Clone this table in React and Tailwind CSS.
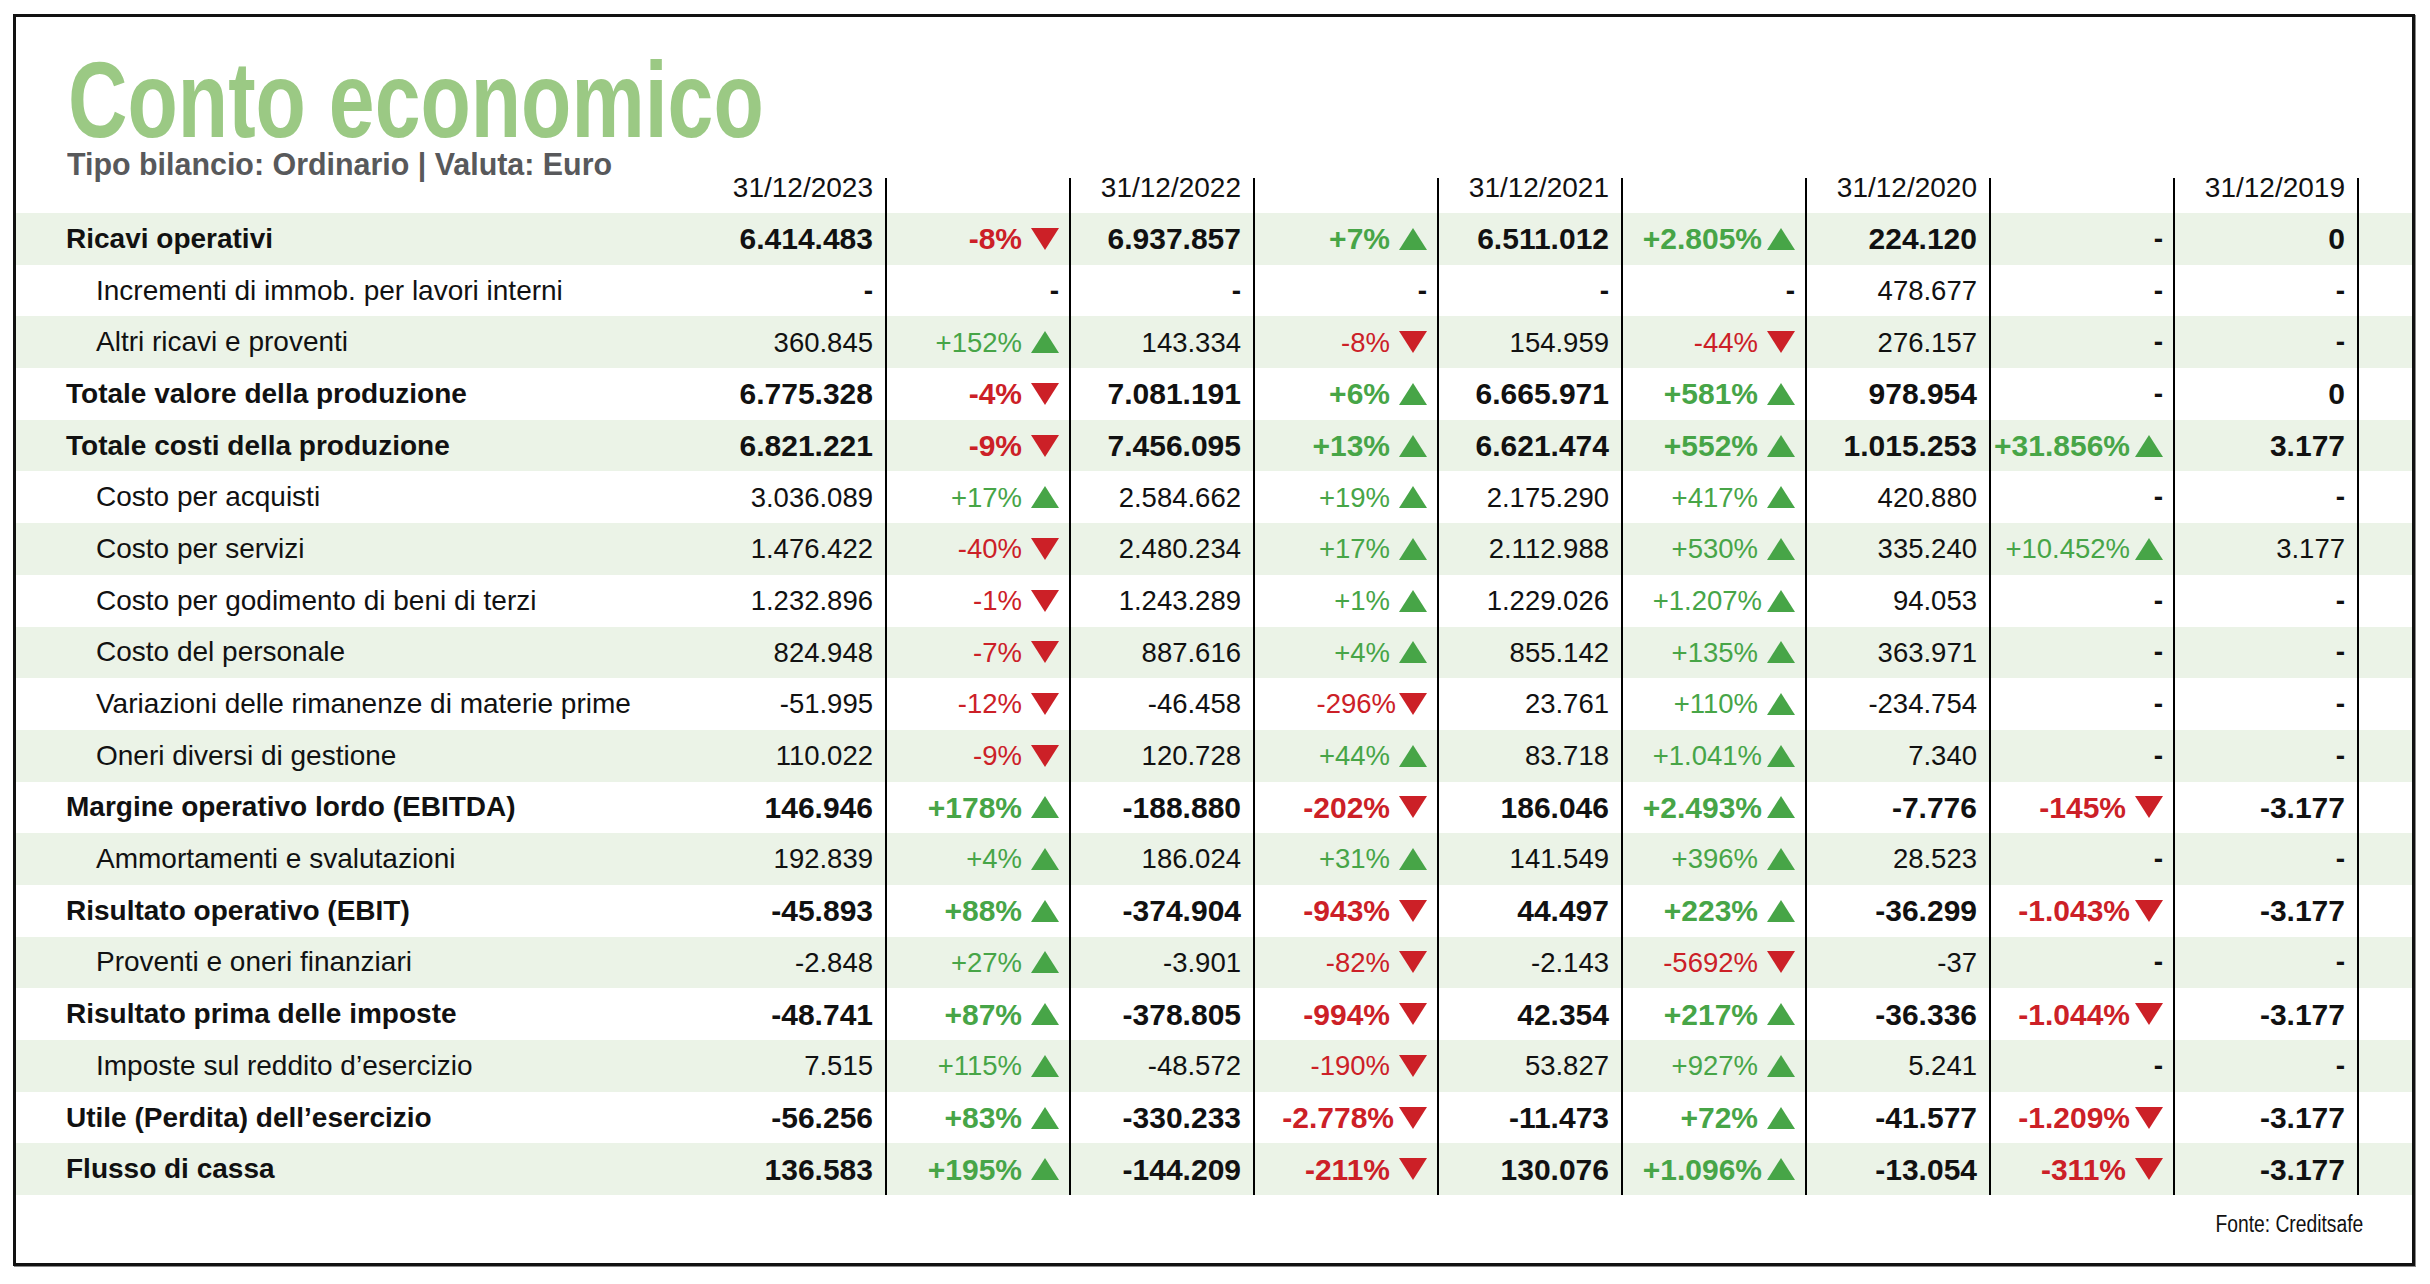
import React from "react";
import clsx from "clsx";

const rows = [
  ["Ricavi operativi", true, ["6.414.483", "-8%", "6.937.857", "+7%", "6.511.012", "+2.805%", "224.120", "-", "0"]],
  ["Incrementi di immob. per lavori interni", false, ["-", "-", "-", "-", "-", "-", "478.677", "-", "-"]],
  ["Altri ricavi e proventi", false, ["360.845", "+152%", "143.334", "-8%", "154.959", "-44%", "276.157", "-", "-"]],
  ["Totale valore della produzione", true, ["6.775.328", "-4%", "7.081.191", "+6%", "6.665.971", "+581%", "978.954", "-", "0"]],
  ["Totale costi della produzione", true, ["6.821.221", "-9%", "7.456.095", "+13%", "6.621.474", "+552%", "1.015.253", "+31.856%", "3.177"]],
  ["Costo per acquisti", false, ["3.036.089", "+17%", "2.584.662", "+19%", "2.175.290", "+417%", "420.880", "-", "-"]],
  ["Costo per servizi", false, ["1.476.422", "-40%", "2.480.234", "+17%", "2.112.988", "+530%", "335.240", "+10.452%", "3.177"]],
  ["Costo per godimento di beni di terzi", false, ["1.232.896", "-1%", "1.243.289", "+1%", "1.229.026", "+1.207%", "94.053", "-", "-"]],
  ["Costo del personale", false, ["824.948", "-7%", "887.616", "+4%", "855.142", "+135%", "363.971", "-", "-"]],
  ["Variazioni delle rimanenze di materie prime", false, ["-51.995", "-12%", "-46.458", "-296%", "23.761", "+110%", "-234.754", "-", "-"]],
  ["Oneri diversi di gestione", false, ["110.022", "-9%", "120.728", "+44%", "83.718", "+1.041%", "7.340", "-", "-"]],
  ["Margine operativo lordo (EBITDA)", true, ["146.946", "+178%", "-188.880", "-202%", "186.046", "+2.493%", "-7.776", "-145%", "-3.177"]],
  ["Ammortamenti e svalutazioni", false, ["192.839", "+4%", "186.024", "+31%", "141.549", "+396%", "28.523", "-", "-"]],
  ["Risultato operativo (EBIT)", true, ["-45.893", "+88%", "-374.904", "-943%", "44.497", "+223%", "-36.299", "-1.043%", "-3.177"]],
  ["Proventi e oneri finanziari", false, ["-2.848", "+27%", "-3.901", "-82%", "-2.143", "-5692%", "-37", "-", "-"]],
  ["Risultato prima delle imposte", true, ["-48.741", "+87%", "-378.805", "-994%", "42.354", "+217%", "-36.336", "-1.044%", "-3.177"]],
  ["Imposte sul reddito d’esercizio", false, ["7.515", "+115%", "-48.572", "-190%", "53.827", "+927%", "5.241", "-", "-"]],
  ["Utile (Perdita) dell’esercizio", true, ["-56.256", "+83%", "-330.233", "-2.778%", "-11.473", "+72%", "-41.577", "-1.209%", "-3.177"]],
  ["Flusso di cassa", true, ["136.583", "+195%", "-144.209", "-211%", "130.076", "+1.096%", "-13.054", "-311%", "-3.177"]],
];

const dates = ["31/12/2023", "", "31/12/2022", "", "31/12/2021", "", "31/12/2020", "", "31/12/2019"];

const gridCols = "grid grid-cols-[687px_repeat(9,184px)_1fr]";

function Triangle({ up, className }) {
  return (
    <svg width="28" height="22" viewBox="0 0 28 22" className={clsx("shrink-0", className)}>
      {up ? (
        <polygon points="0,22 14,0 28,22" fill="#47a547" />
      ) : (
        <polygon points="0,0 28,0 14,22" fill="#cc2027" />
      )}
    </svg>
  );
}

function ValueCell({ v, bold }) {
  return (
    <div className="flex items-center justify-end border-r-2 border-black pr-[12px]">
      {v === "-" ? (
        <span className="font-bold text-[28px]">-</span>
      ) : (
        <span className={bold ? "font-bold text-[30px]" : "text-[27.5px]"}>{v}</span>
      )}
    </div>
  );
}

function PctCell({ v, bold }) {
  if (v === "-") {
    return (
      <div className="flex items-center justify-end border-r-2 border-black pr-[10px]">
        <span className="font-bold text-[28px]">-</span>
      </div>
    );
  }
  const up = v.startsWith("+");
  const gap = v === "-296%" ? "ml-[3px]" : v.length >= 7 ? "ml-[5px]" : "ml-[9px]";
  return (
    <div className="flex items-center justify-end border-r-2 border-black pr-[10px]">
      <span
        className={clsx(
          up ? "text-[#47a547]" : "text-[#cc2027]",
          bold ? "font-bold text-[30px]" : "text-[27.5px]"
        )}
      >
        {v}
      </span>
      <Triangle up={up} className={gap} />
    </div>
  );
}

export default function App() {
  return (
    <div className="min-h-screen bg-white pt-[14px] pl-[13px] [font-family:'Liberation_Sans',Arial,sans-serif] text-[#111]">
      <div className="flex h-[1252px] w-[2402px] flex-col border-[3px] border-[#111] shadow-[1px_1px_0_#8a8a8a]">
        <div className="mt-[33px] h-[100px] pl-[52px]">
          <h1 className="inline-block origin-left scale-x-[0.77] text-[107px] leading-[100px] font-bold text-[#9bc984]">
            Conto economico
          </h1>
        </div>
        <div className="h-[28px] pl-[51px]">
          <span className="inline-block origin-left scale-x-[0.95] text-[32px] leading-[28px] font-bold text-[#58595b]">
            Tipo bilancio: Ordinario | Valuta: Euro
          </span>
        </div>

        <div className={clsx(gridCols, "h-[35px]")}>
          <div />
          {dates.map((d, i) => (
            <div key={i} className="border-r-2 border-black pr-[12px] text-right text-[28px] leading-[20px]">
              {d}
            </div>
          ))}
          <div />
        </div>

        {rows.map(([label, bold, values], r) => (
          <div key={label} className={clsx(gridCols, "h-[51.7px]", r % 2 === 0 ? "bg-[#ebf3e7]" : "bg-white")}>
            <div
              className={clsx(
                "flex items-center text-[28px]",
                bold ? "pl-[50px] font-bold" : "pl-[80px]"
              )}
            >
              {label}
            </div>
            {values.map((v, i) =>
              i % 2 === 0 ? (
                <ValueCell key={i} v={v} bold={bold} />
              ) : (
                <PctCell key={i} v={v} bold={bold} />
              )
            )}
            <div />
          </div>
        ))}

        <div className="mt-[17px] pr-[49px] text-right">
          <span className="inline-block origin-right scale-x-[0.82] text-[23.5px] leading-[24px]">
            Fonte: Creditsafe
          </span>
        </div>
      </div>
    </div>
  );
}
